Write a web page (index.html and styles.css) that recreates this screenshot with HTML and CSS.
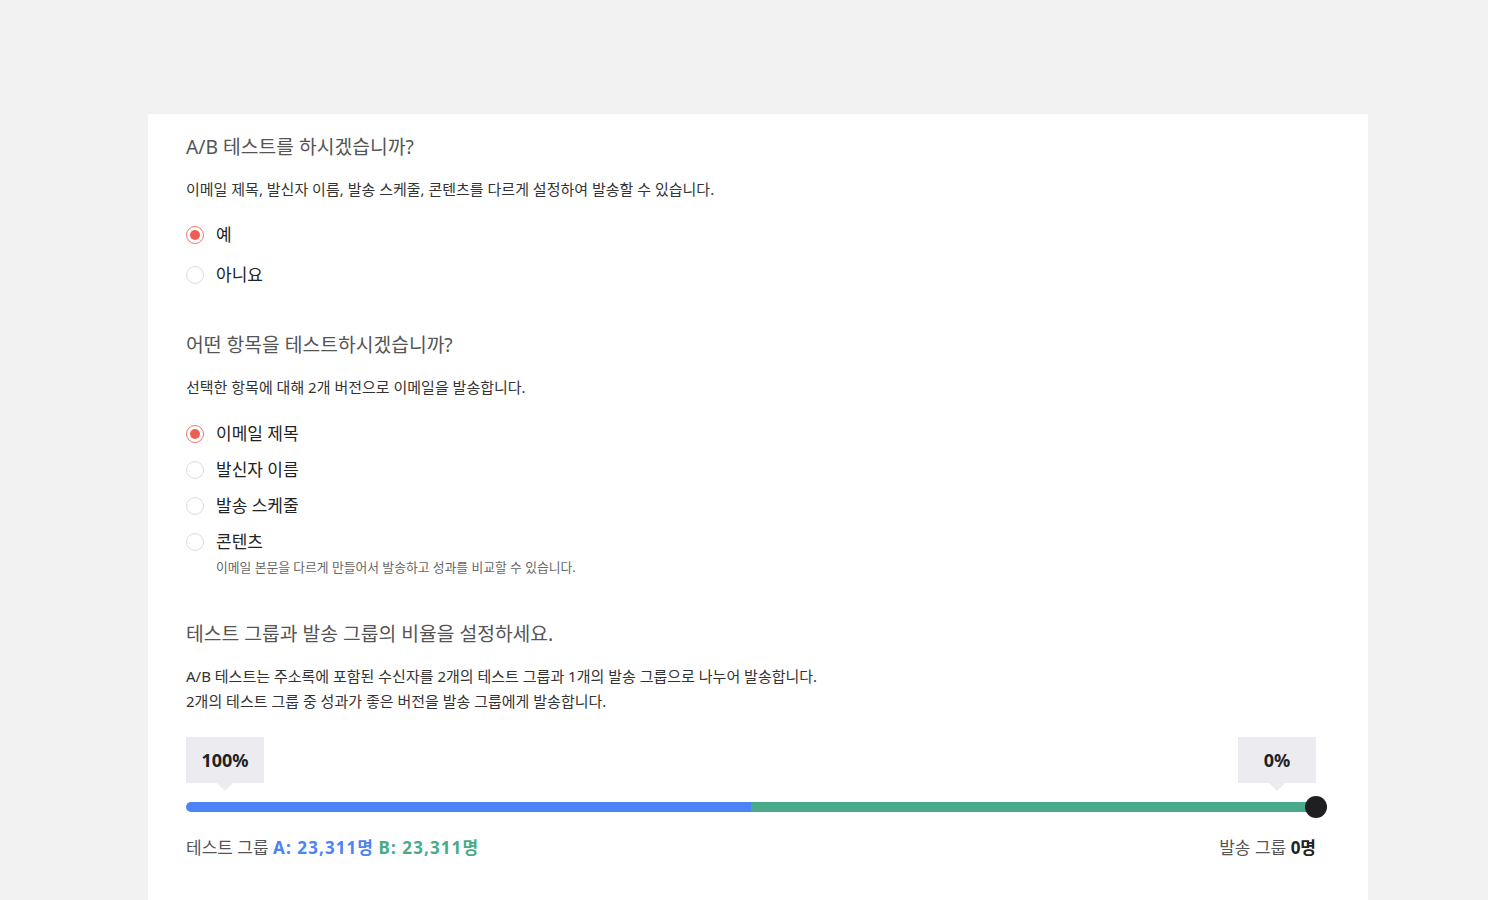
FILE: index.html
```html
<!DOCTYPE html>
<html lang="ko">
<head>
  <meta charset="UTF-8" />
  <title>A/B 테스트 설정</title>
  <link rel="stylesheet" href="styles.css">
</head>
<body>
  <div class="card">
    <!-- A/B test on/off -->
    <div class="section">
      <h2>A/B 테스트를 하시겠습니까?</h2>
      <p class="desc">이메일 제목, 발신자 이름, 발송 스케줄, 콘텐츠를 다르게 설정하여 발송할 수 있습니다.</p>
      <div class="options wide">
        <label class="radio checked"><span class="dot"></span>예</label>
        <label class="radio"><span class="dot"></span>아니요</label>
      </div>
    </div>

    <!-- Test item -->
    <div class="section">
      <h2>어떤 항목을 테스트하시겠습니까?</h2>
      <p class="desc">선택한 항목에 대해 2개 버전으로 이메일을 발송합니다.</p>
      <div class="options">
        <label class="radio checked"><span class="dot"></span>이메일 제목</label>
        <label class="radio"><span class="dot"></span>발신자 이름</label>
        <label class="radio"><span class="dot"></span>발송 스케줄</label>
        <div>
          <label class="radio"><span class="dot"></span>콘텐츠</label>
          <p class="help">이메일 본문을 다르게 만들어서 발송하고 성과를 비교할 수 있습니다.</p>
        </div>
      </div>
    </div>

    <!-- Ratio -->
    <div class="section">
      <h2>테스트 그룹과 발송 그룹의 비율을 설정하세요.</h2>
      <p class="desc multi">A/B 테스트는 주소록에 포함된 수신자를 2개의 테스트 그룹과 1개의 발송 그룹으로 나누어 발송합니다.<br>2개의 테스트 그룹 중 성과가 좋은 버전을 발송 그룹에게 발송합니다.</p>

      <div class="ratio">
        <div class="tips">
          <span class="tip">100%</span>
          <span class="tip">0%</span>
        </div>
        <div class="track">
          <span class="bar-a" style="width: 50%"></span>
          <span class="bar-b" style="width: 50%"></span>
          <span class="knob"></span>
        </div>
        <div class="counts">
          <div>테스트 그룹 <b class="a">A: 23,311명</b> <b class="b">B: 23,311명</b></div>
          <div>발송 그룹 <b>0명</b></div>
        </div>
      </div>
    </div>
  </div>
</body>
</html>
```

FILE: styles.css
```css
body {
  margin: 0;
  background: #f2f2f2;
  font-family: "Noto Sans", "Noto Sans CJK KR", sans-serif;
  color: #222;
}
.card {
  width: 1220px;
  margin: 114px 0 0 148px;
  background: #fff;
  padding: 19px 52px 40px 38px;
  box-sizing: border-box;
  min-height: 800px;
}
.section {
  margin-bottom: 44px;
}
h2 {
  margin: 0;
  font-size: 19.3px;
  line-height: 28px;
  font-weight: normal;
  color: #555;
}
.desc {
  margin: 18px 0 0;
  font-size: 15px;
  line-height: 20px;
  color: #333;
}
.desc.multi {
  margin-top: 16px;
  line-height: 25px;
}
.options {
  margin-top: 25px;
  display: flex;
  flex-direction: column;
  gap: 12px;
}
.options.wide {
  margin-top: 24px;
  gap: 16px;
}
.radio {
  display: flex;
  align-items: center;
  gap: 12px;
  font-size: 17px;
  line-height: 24px;
  color: #222;
}
.dot {
  width: 18px;
  height: 18px;
  border: 1px solid #dcdcdc;
  border-radius: 50%;
  box-sizing: border-box;
  display: flex;
  align-items: center;
  justify-content: center;
}
.checked .dot {
  border: 1.5px solid #ee766c;
}
.checked .dot::after {
  content: "";
  width: 10px;
  height: 10px;
  border-radius: 50%;
  background: #ec5f55;
}
.help {
  margin: 4px 0 0 30px;
  font-size: 12.8px;
  line-height: 18px;
  color: #666;
}
.ratio {
  margin-top: 23px;
}
.tips {
  display: flex;
  justify-content: space-between;
}
.tip {
  position: relative;
  background: #ebebf0;
  width: 78px;
  height: 46px;
  line-height: 46px;
  text-align: center;
  font-size: 18px;
  font-weight: bold;
  color: #222;
}
.tip::after {
  content: "";
  position: absolute;
  left: 50%;
  bottom: -8px;
  margin-left: -8px;
  border-left: 8px solid transparent;
  border-right: 8px solid transparent;
  border-top: 8px solid #ebebf0;
}
.track {
  position: relative;
  display: flex;
  height: 10px;
  margin-top: 19px;
  border-radius: 5px;
}
.bar-a {
  background: #4d83f6;
  border-radius: 5px 0 0 5px;
}
.bar-b {
  background: #47ab8b;
}
.knob {
  position: absolute;
  right: -11px;
  top: -6px;
  width: 22px;
  height: 22px;
  border-radius: 50%;
  background: #1f1f22;
}
.counts {
  display: flex;
  justify-content: space-between;
  margin-top: 24px;
  font-size: 17px;
  line-height: 24px;
  color: #555;
}
.counts b {
  color: #222;
}
.counts b.a {
  color: #4d83f6;
  letter-spacing: 1.1px;
}
.counts b.b {
  color: #47ab8b;
  letter-spacing: 1.1px;
}
```
